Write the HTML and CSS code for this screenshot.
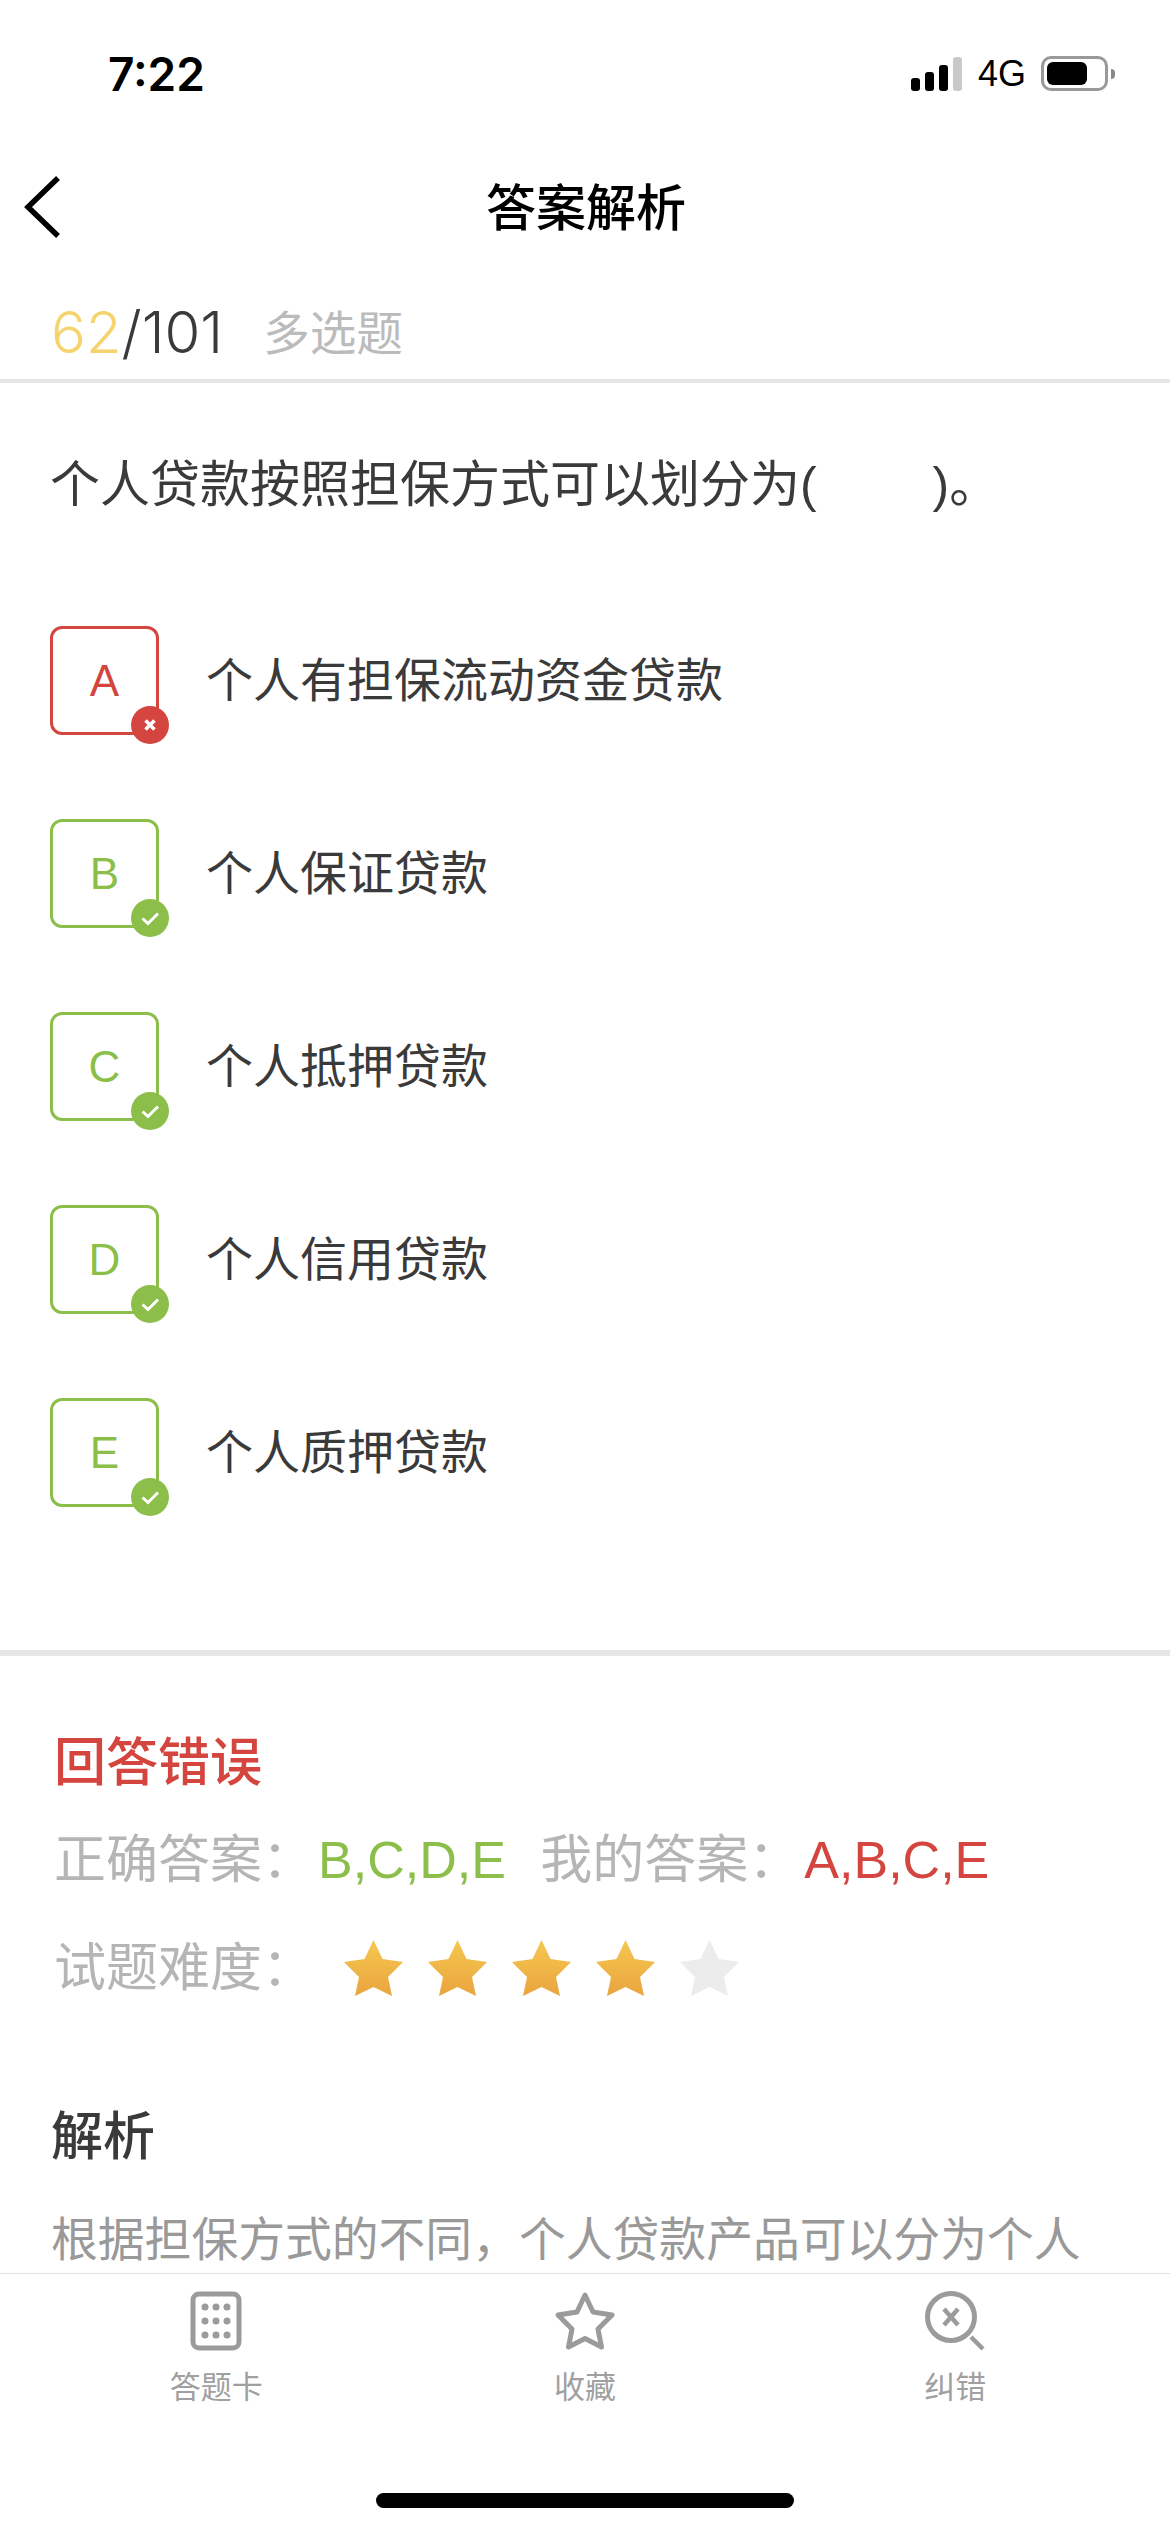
FILE: index.html
```html
<!DOCTYPE html>
<html lang="zh-CN">
<head>
    <meta charset="UTF-8">
    <meta name="viewport" content="width=device-width, initial-scale=1.0">
    <title>答案解析</title>
    <link rel="stylesheet" href="styles.css">
</head>
<body>
<div class="page">
    <div class="status-bar">
        <span class="time">7:22</span>
        <div class="status-right">
            <div class="signal">
                <i class="bar b1"></i><i class="bar b2"></i><i class="bar b3"></i><i class="bar b4"></i>
            </div>
            <span class="net">4G</span>
            <div class="battery"><div class="battery-fill"></div></div>
            <div class="battery-nub"></div>
        </div>
    </div>

    <div class="nav">
        <svg class="back" width="40" height="64" viewBox="0 0 40 64">
            <path d="M35 3 L5 32 L35 61" fill="none" stroke="#000" stroke-width="5.5"/>
        </svg>
        <h1 class="nav-title">答案解析</h1>
    </div>

    <div class="content">
        <div class="progress">
            <span class="num"><span class="current">62</span>/101</span>
            <span class="type">多选题</span>
        </div>

        <p class="question">个人贷款按照担保方式可以划分为(        )。</p>

        <div class="options">
            <div class="option">
                <div class="letter wrong">A
                    <svg class="mark" viewBox="0 0 38 38"><circle cx="19" cy="19" r="19" fill="#d4453f"/><path d="M14.5 14.5 L23.5 23.5 M23.5 14.5 L14.5 23.5" stroke="#fff" stroke-width="3.5" fill="none"/></svg>
                </div>
                <span class="option-text">个人有担保流动资金贷款</span>
            </div>
            <div class="option">
                <div class="letter right">B
                    <svg class="mark" viewBox="0 0 38 38"><circle cx="19" cy="19" r="19" fill="#8bbf4a"/><path d="M11.5 19.5 L17 24.5 L27 14.5" stroke="#fff" stroke-width="3" fill="none"/></svg>
                </div>
                <span class="option-text">个人保证贷款</span>
            </div>
            <div class="option">
                <div class="letter right">C
                    <svg class="mark" viewBox="0 0 38 38"><circle cx="19" cy="19" r="19" fill="#8bbf4a"/><path d="M11.5 19.5 L17 24.5 L27 14.5" stroke="#fff" stroke-width="3" fill="none"/></svg>
                </div>
                <span class="option-text">个人抵押贷款</span>
            </div>
            <div class="option">
                <div class="letter right">D
                    <svg class="mark" viewBox="0 0 38 38"><circle cx="19" cy="19" r="19" fill="#8bbf4a"/><path d="M11.5 19.5 L17 24.5 L27 14.5" stroke="#fff" stroke-width="3" fill="none"/></svg>
                </div>
                <span class="option-text">个人信用贷款</span>
            </div>
            <div class="option">
                <div class="letter right">E
                    <svg class="mark" viewBox="0 0 38 38"><circle cx="19" cy="19" r="19" fill="#8bbf4a"/><path d="M11.5 19.5 L17 24.5 L27 14.5" stroke="#fff" stroke-width="3" fill="none"/></svg>
                </div>
                <span class="option-text">个人质押贷款</span>
            </div>
        </div>

        <div class="result">
            <h2 class="result-title">回答错误</h2>
            <p class="answers">
                <span class="label">正确答案：</span><span class="ok">B,C,D,E</span>
                <span class="label mine">我的答案：</span><span class="bad">A,B,C,E</span>
            </p>
            <div class="difficulty">
                <span class="label">试题难度：</span>
                <div class="stars">
                    <svg class="star" viewBox="0 0 59 56"><defs><linearGradient id="gold" x1="0" y1="0" x2="0" y2="1"><stop offset="0" stop-color="#f5c84f"/><stop offset="1" stop-color="#eaa43f"/></linearGradient></defs><path d="M29.5 0 L38.5 19 L59 22 L44 37 L48 56 L29.5 47 L11 56 L15 37 L0 22 L20.5 19 Z" fill="url(#gold)"/></svg>
                    <svg class="star" viewBox="0 0 59 56"><path d="M29.5 0 L38.5 19 L59 22 L44 37 L48 56 L29.5 47 L11 56 L15 37 L0 22 L20.5 19 Z" fill="url(#gold)"/></svg>
                    <svg class="star" viewBox="0 0 59 56"><path d="M29.5 0 L38.5 19 L59 22 L44 37 L48 56 L29.5 47 L11 56 L15 37 L0 22 L20.5 19 Z" fill="url(#gold)"/></svg>
                    <svg class="star" viewBox="0 0 59 56"><path d="M29.5 0 L38.5 19 L59 22 L44 37 L48 56 L29.5 47 L11 56 L15 37 L0 22 L20.5 19 Z" fill="url(#gold)"/></svg>
                    <svg class="star" viewBox="0 0 59 56"><path d="M29.5 0 L38.5 19 L59 22 L44 37 L48 56 L29.5 47 L11 56 L15 37 L0 22 L20.5 19 Z" fill="#ececec"/></svg>
                </div>
            </div>
        </div>

        <div class="analysis">
            <h2 class="analysis-title">解析</h2>
            <p class="analysis-text">根据担保方式的不同，个人贷款产品可以分为个人</p>
        </div>
    </div>

    <div class="tabbar">
        <div class="tab">
            <svg class="tab-icon" width="52" height="60" viewBox="0 0 52 60">
                <rect x="3" y="3" width="46" height="54" rx="6" fill="none" stroke="#9b9b9b" stroke-width="5"/>
                <g fill="#9b9b9b">
                    <circle cx="15" cy="16" r="3.500"/><circle cx="26" cy="16" r="3.500"/><circle cx="37" cy="16" r="3.500"/>
                    <circle cx="15" cy="30" r="3.500"/><circle cx="26" cy="30" r="3.500"/><circle cx="37" cy="30" r="3.500"/>
                    <circle cx="15" cy="44" r="3.500"/><circle cx="26" cy="44" r="3.500"/><circle cx="37" cy="44" r="3.500"/>
                </g>
            </svg>
            <span class="tab-label">答题卡</span>
        </div>
        <div class="tab">
            <svg class="tab-icon" width="62" height="60" viewBox="0 0 62 60">
                <path d="M31 4 L39 21 L58 24 L44 38 L47.500 56 L31 47.500 L14.500 56 L18 38 L4 24 L23 21 Z" fill="none" stroke="#9b9b9b" stroke-width="5" stroke-linejoin="round"/>
            </svg>
            <span class="tab-label">收藏</span>
        </div>
        <div class="tab tab-last">
            <svg class="tab-icon" width="60" height="60" viewBox="0 0 60 60">
                <circle cx="26" cy="26" r="23.500" fill="none" stroke="#9b9b9b" stroke-width="5"/>
                <path d="M19 18 L33 34 M33 18 L19 34" stroke="#9b9b9b" stroke-width="4.500" fill="none"/>
                <path d="M46 46 L58 58" stroke="#9b9b9b" stroke-width="4.500" fill="none"/>
            </svg>
            <span class="tab-label">纠错</span>
        </div>
    </div>

    <div class="home-area"><div class="home-bar"></div></div>
</div>
</body>
</html>
```

FILE: styles.css
```css
* {
    box-sizing: border-box;
}
body {
    margin: 0;
    background: #fff;
    font-family: "Liberation Sans", "Noto Sans CJK SC", sans-serif;
    color: #3a3a3a;
}
h1, h2, p {
    margin: 0;
    font-weight: normal;
}
.page {
    width: 1170px;
    height: 2532px;
    display: flex;
    flex-direction: column;
    overflow: hidden;
}

/* status bar */
.status-bar {
    height: 130px;
    flex: none;
    display: flex;
    justify-content: space-between;
    align-items: flex-start;
    padding: 48px 55px 0 108px;
    color: #000;
}
.time {
    font-family: Inter, sans-serif;
    font-size: 46px;
    font-weight: 600;
    line-height: 52px;
}
.status-right {
    display: flex;
    align-items: center;
    height: 35px;
    margin-top: 8px;
}
.signal {
    display: flex;
    align-items: flex-end;
    gap: 5px;
    height: 34px;
}
.bar {
    width: 9px;
    background: #000;
    border-radius: 3px;
}
.b1 { height: 13px; }
.b2 { height: 19px; }
.b3 { height: 26px; }
.b4 { height: 34px; background: #c9c9c9; }
.net {
    font-size: 36px;
    margin: 0 15px 0 16px;
}
.battery {
    width: 67px;
    height: 35px;
    border: 3px solid #999;
    border-radius: 10px;
    padding: 3px;
}
.battery-fill {
    width: 40px;
    height: 100%;
    background: #000;
    border-radius: 6px;
}
.battery-nub {
    width: 4px;
    height: 10px;
    margin-left: 3px;
    background: #888;
    border-radius: 0 4px 4px 0;
}

/* nav */
.nav {
    height: 154px;
    flex: none;
    position: relative;
    display: flex;
    align-items: center;
    justify-content: center;
}
.back {
    position: absolute;
    left: 23px;
    top: 45px;
}
.nav-title {
    font-size: 50px;
    font-weight: 500;
    color: #000;
    padding: 0 0 7px 2px;
}

.content {
    flex: 1;
    overflow: hidden;
}

/* progress */
.progress {
    height: 99px;
    padding: 0 51px;
    display: flex;
    align-items: center;
    gap: 40px;
    border-bottom: 4px solid #e6e6e6;
}
.num {
    font-family: Inter, "Liberation Sans", sans-serif;
    font-weight: 300;
    font-size: 58px;
}
.current {
    color: #f5d36e;
}
.type {
    font-size: 46.600px;
    color: #bbb;
    padding-bottom: 5px;
}

.question {
    padding: 67px 50px 0;
    font-size: 50px;
    line-height: 70px;
    white-space: pre;
    word-spacing: 0.6px;
}

/* options */
.options {
    padding: 106px 50px 0;
    display: flex;
    flex-direction: column;
    gap: 84px;
}
.option {
    display: flex;
    align-items: center;
    gap: 47px;
    font-size: 47px;
}
.option-text {
    padding-bottom: 8px;
}
.letter {
    position: relative;
    width: 109px;
    height: 109px;
    border: 3px solid;
    border-radius: 12px;
    display: flex;
    align-items: center;
    justify-content: center;
    font-size: 44px;
    font-weight: normal;
}
.mark {
    position: absolute;
    right: -13px;
    bottom: -12px;
    width: 38px;
    height: 38px;
}
.wrong {
    color: #d4453f;
    border-color: #d4453f;
}
.right {
    color: #8bbf4a;
    border-color: #8bbf4a;
}

/* result */
.result {
    margin-top: 143px;
    border-top: 6px solid #e6e6e6;
    padding: 72px 54px 0;
}
.result-title {
    font-size: 52px;
    font-weight: 500;
    color: #d4453f;
    line-height: 70px;
}
.label {
    color: #b5b5b5;
}
.answers {
    margin-top: 27px;
    font-size: 52px;
    line-height: 70px;
}
.ok, .bad {
    margin-left: 4px;
}
.ok { color: #8bbf4a; }
.bad { color: #d4453f; }
.mine {
    margin-left: 20px;
}
.difficulty {
    margin-top: 38px;
    display: flex;
    align-items: center;
    font-size: 52px;
    line-height: 70px;
}
.stars {
    display: flex;
    gap: 25px;
    margin-left: 30px;
}
.star {
    width: 59px;
    height: 56px;
}

/* analysis */
.analysis {
    padding: 99px 51px 0;
}
.analysis-title {
    font-size: 52px;
    font-weight: 500;
    line-height: 70px;
}
.analysis-text {
    margin-top: 33px;
    font-size: 46.800px;
    line-height: 70px;
    color: #999;
    white-space: nowrap;
}

/* tab bar */
.tabbar {
    flex: none;
    height: 150px;
    border-top: 1px solid #e2e2e2;
    background: #fff;
    padding: 17px 32px 0;
    display: flex;
}
.tab {
    width: 369px;
    display: flex;
    flex-direction: column;
    align-items: center;
    gap: 19px;
}
.tab-last {
    padding-left: 3px;
}
.tab-label {
    font-size: 31px;
    line-height: 36px;
    color: #a0a0a0;
}
.home-area {
    flex: none;
    height: 109px;
    padding-top: 70px;
    display: flex;
    justify-content: center;
}
.home-bar {
    width: 418px;
    height: 15px;
    background: #000;
    border-radius: 8px;
}
```
